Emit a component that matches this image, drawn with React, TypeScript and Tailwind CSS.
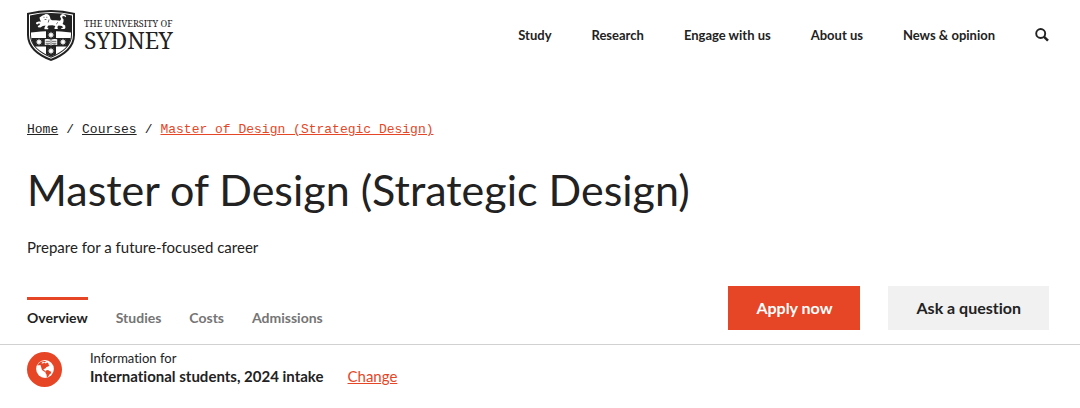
const navLinks = ['Study', 'Research', 'Engage with us', 'About us', 'News & opinion'];
const tabs = ['Overview', 'Studies', 'Costs', 'Admissions'];

function Star({ x, y }: { x: number; y: number }) {
  return (
    <path
      transform={`translate(${x} ${y})`}
      fill="#fff"
      d="M0-3.5 .8-1.5 2.6-2.5 1.5-.7 3.5 0 1.5.7 2.6 2.5.8 1.5 0 3.5-.8 1.5-2.6 2.5-1.5.7-3.5 0-1.5-.7-2.6-2.5-.8-1.5z"
    />
  );
}

function Shield() {
  return (
    <svg viewBox="0 0 48 51" className="w-12 shrink-0" aria-hidden="true">
      <path fill="#222" d="M0 3Q12 0 24 0t24 3v22c0 12-10 21-24 26C10 46 0 37 0 25z" />
      <path fill="#fff" d="M2 4.500Q13 2 24 2t22 2.500V25c0 11-9 19-22 23.800C11 44 2 36 2 25z" />
      <path fill="#222" d="M3 5.400Q13 3 24 3t21 2.400V25c0 10-8.500 18-21 22.700C11.500 43 3 35 3 25z" />
      <path fill="#fff" d="M4 22.500q20-3 40 0V25c0 9.500-8 17-20 21.600C12 42 4 34.500 4 25z" />
      <path fill="#222" d="M19 21h10v7h14.700q-.700 4.500-3.200 8.500H29v8l-5 2.100-5-2.100v-8H7.500q-2.500-4-3.200-8.500H19z" />
      <Star x={24} y={25} />
      <Star x={12} y={32} />
      <Star x={36} y={32} />
      <Star x={24} y={41} />
      <path fill="#fff" d="M17.800 29.300q3.500-1 6.200.5 2.700-1.500 6.200-.5V35q-3.500-1-6.200.5-2.700-1.500-6.200-.5z" />
      <path stroke="#222" strokeWidth=".7" fill="none" d="M24 30v5.500M18.600 31.300h4.400M25 31.300h4.400M18.600 33.300h4.400M25 33.300h4.400" />
      {/* lion passant */}
      <g transform="translate(0 1)">
        <path
          fill="#fff"
          d="M15.500 4.500l2-.8 1.200-.7 2 .3 1.500 1 .8 1.700.5 2.200 1.500 1 4 .1 4 .4 1.200-1.800-1.200-2.400.8-1.700 2-.7 2.200.6 1.200 1.500-.6 1-1.600-1.200-1.800.4.2 1.500 1.200 1.600-.2 2.500-.8 2 2.600 1.500.2 2.500-1 1h-3l-.2-1 2-.6-1.300-1.400-3.400-.5-1.500 1.800 1 .4-.4 1.300h-3l-.2-1 1-2-3-.7-4 .3-1.500 1.800 1.500.4-.3 1.500h-3.500l-.3-1.200 1.300-2.600-2.800.4-2.500 1.700-2.300-.3-.2-1.300 1.500-.8 1-1.400-1.800-.2-1.200.8-1.300-.7.3-1.500 2.500-.7 2.300.1-1.100-1.800-.5-2.200z"
        />
        <path stroke="#222" strokeWidth=".7" fill="none" d="M16.500 6.300h1M19.300 6.300h1M17.600 8.500h1.800M22 8.500l-.8 3M31 11.300l-1.800 1.800" />
      </g>
    </svg>
  );
}

function SearchIcon() {
  return (
    <svg viewBox="0 0 14 14" className="size-3.5" fill="none" stroke="#222">
      <circle cx="5.700" cy="5.500" r="4.500" strokeWidth="1.900" />
      <path d="M8.800 8.600l4.200 4.100" strokeWidth="2.500" />
    </svg>
  );
}

function GlobeIcon() {
  return (
    <svg viewBox="0 0 18 18" className="size-[18px]" aria-hidden="true">
      <circle cx="9" cy="9" r="8.900" fill="#fff" />
      <path
        fill="#e64626"
        d="M2.700 3.500C4.500 1.700 6.500 1 9 1l1.300.8-1.800.5L6.800 2l-1.500 1.200 1.700.3 1.200-.7 1.800.6.900-1 1.400.7.200 1.400 1 .7-1.300 1.300-1.700.5-1.200 1.500-1.500.5-.3 1 1.300.6 1.200 1.200-.9.200-1.800-.9-1.300-1.200L5 6.800 4.400 5l-2.900.4z"
      />
      <path fill="#e64626" d="M10 10.400l2-.4 1.500 1 1.700.7-.4 1.800-1.600 1.200-.8 1.700-1.500 1-.4-3-1.200-1.700z" />
    </svg>
  );
}

export default function App() {
  return (
    <div className="bg-white pb-5 font-['Lato',sans-serif] text-[#222] [font-variant-ligatures:none]">
      <header className="flex items-start justify-between pt-[10px] pr-[31px] pl-[27px]">
        <a href="#home" className="flex gap-[9px]" aria-label="The University of Sydney">
          <Shield />
          <span className="flex flex-col pt-2 font-['Noto_Serif','Liberation_Serif',serif]">
            <span className="text-[9px] leading-3">THE UNIVERSITY OF</span>
            <span className="text-[23px] leading-5">SYDNEY</span>
          </span>
        </a>
        <nav className="flex items-center gap-10 pt-[14px] text-[13px] leading-[22px] font-bold">
          {navLinks.map((link) => (
            <a key={link} href="#nav">
              {link}
            </a>
          ))}
          <button aria-label="Search">
            <SearchIcon />
          </button>
        </nav>
      </header>

      <main className="pt-[60px]">
        <div className="pr-[31px] pl-[27px]">
          <nav aria-label="Breadcrumb" className="flex gap-2 font-['Liberation_Mono',monospace] text-[13px] leading-[18px]">
            <a href="#home" className="underline">
              Home
            </a>
            <span>/</span>
            <a href="#courses" className="underline">
              Courses
            </a>
            <span>/</span>
            <a href="#course" className="text-[#e64626] underline">
              Master of Design (Strategic Design)
            </a>
          </nav>

          <h1 className="pt-[26px] text-[43px] leading-[50px]">Master of Design (Strategic Design)</h1>
          <p className="pt-[22px] text-[15px] leading-5">Prepare for a future-focused career</p>

          <div className="flex justify-between pt-[29px]">
            <nav className="flex gap-7 pt-[11px] text-sm leading-5 font-bold">
              {tabs.map((tab, i) => (
                <a
                  key={tab}
                  href="#tab"
                  className={
                    i === 0
                      ? 'border-t-[3px] border-[#e64626] pt-2'
                      : 'border-t-[3px] border-transparent pt-2 text-[#757575]'
                  }
                >
                  {tab}
                </a>
              ))}
            </nav>
            <div className="flex gap-7 pb-[14px] text-base font-bold">
              <button className="h-11 bg-[#e64626] px-7 text-white">Apply now</button>
              <button className="h-11 bg-[#f1f1f1] px-7">Ask a question</button>
            </div>
          </div>
        </div>

        <section className="flex items-center gap-7 border-t border-[#d1d1d1] px-[27px] pt-1">
          <div className="flex size-[35px] items-center justify-center rounded-full bg-[#e64626]">
            <GlobeIcon />
          </div>
          <div className="flex items-end gap-6 pb-1 text-[15px] leading-[18px]">
            <div>
              <p className="text-[13px] leading-[18px]">Information for</p>
              <p className="font-bold">International students, 2024 intake</p>
            </div>
            <a href="#change" className="text-[#e64626] underline">
              Change
            </a>
          </div>
        </section>
      </main>
    </div>
  );
}
